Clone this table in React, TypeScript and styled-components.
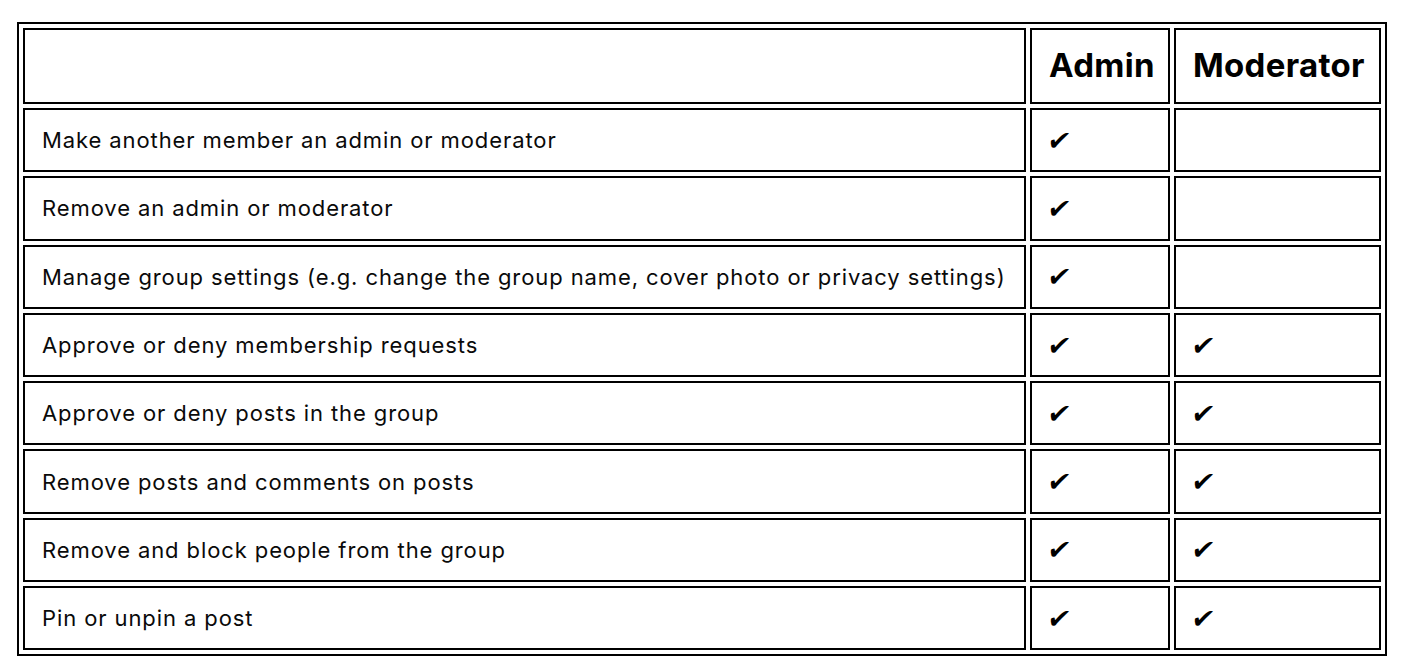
import React from "react";
import styled, { createGlobalStyle } from "styled-components";

const GlobalStyle = createGlobalStyle`
  html, body {
    margin: 0;
    padding: 0;
    background: #ffffff;
  }
  body {
    padding: 22px 0 0 17px;
    font-family: Inter, "Noto Sans", "Liberation Sans", sans-serif;
    color: #000;
  }
`;

const Table = styled.table`
  border: 2px solid #000;
  border-collapse: separate;
  border-spacing: 4px;
  table-layout: fixed;
  width: 1370px;
`;

const Col = styled.col<{ $w: number }>`
  width: ${(p) => p.$w}px;
`;

const HeaderCell = styled.th`
  border: 2px solid #000;
  height: 76px;
  padding: 0 17px 2px 17px;
  box-sizing: border-box;
  font-size: 33px;
  font-weight: 700;
  text-align: left;
  letter-spacing: 0.3px;
  white-space: nowrap;
`;

const Cell = styled.td`
  border: 2px solid #000;
  height: 64.3px;
  padding: 0 17px;
  box-sizing: border-box;
  font-size: 22px;
  font-weight: 400;
  letter-spacing: 0.9px;
  text-align: left;
  white-space: nowrap;
  color: #0a0a0a;
`;

const CheckCell = styled(Cell)`
  font-family: "DejaVu Sans", sans-serif;
  font-size: 27px;
  letter-spacing: 0;
  padding-left: 16px;
  color: #000;
`;

const Check = styled.span`
  display: inline-block;
  transform: skewX(-10deg);
`;

type Row = { label: string; admin: boolean; mod: boolean };

const rows: Row[] = [
  { label: "Make another member an admin or moderator", admin: true, mod: false },
  { label: "Remove an admin or moderator", admin: true, mod: false },
  {
    label:
      "Manage group settings (e.g. change the group name, cover photo or privacy settings)",
    admin: true,
    mod: false,
  },
  { label: "Approve or deny membership requests", admin: true, mod: true },
  { label: "Approve or deny posts in the group", admin: true, mod: true },
  { label: "Remove posts and comments on posts", admin: true, mod: true },
  { label: "Remove and block people from the group", admin: true, mod: true },
  { label: "Pin or unpin a post", admin: true, mod: true },
];

export default function App() {
  return (
    <>
      <GlobalStyle />
      <Table>
        <colgroup>
          <Col $w={1003} />
          <Col $w={140} />
          <Col $w={207} />
        </colgroup>
        <thead>
          <tr>
            <HeaderCell></HeaderCell>
            <HeaderCell>Admin</HeaderCell>
            <HeaderCell>Moderator</HeaderCell>
          </tr>
        </thead>
        <tbody>
          {rows.map((r) => (
            <tr key={r.label}>
              <Cell>{r.label}</Cell>
              <CheckCell>{r.admin ? <Check>✔</Check> : null}</CheckCell>
              <CheckCell>{r.mod ? <Check>✔</Check> : null}</CheckCell>
            </tr>
          ))}
        </tbody>
      </Table>
    </>
  );
}
